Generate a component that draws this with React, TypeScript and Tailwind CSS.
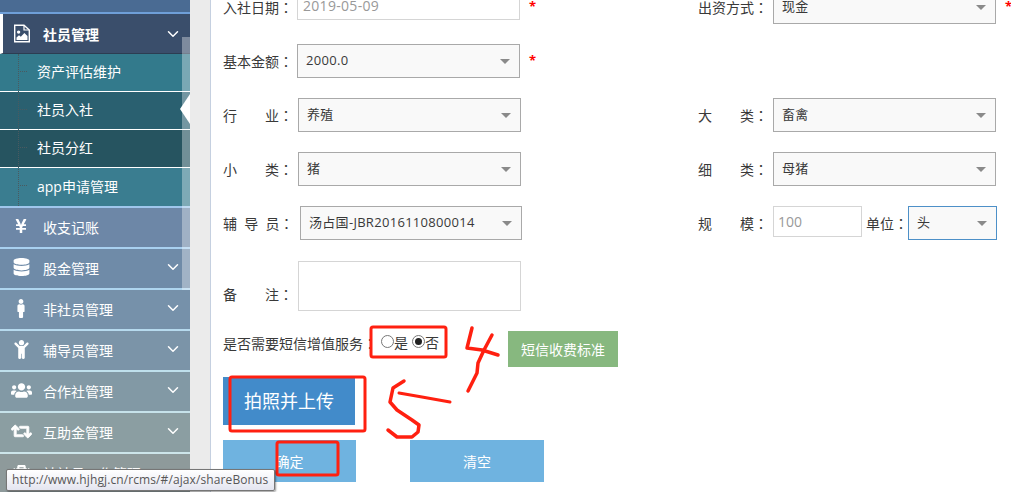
import { FaYenSign, FaDatabase, FaMale, FaChild, FaUsers, FaRetweet, FaMedkit } from "react-icons/fa";
import { ChevronDown } from "lucide-react";
import type { ReactNode } from "react";

const font = { fontFamily: '"Open Sans","Noto Sans CJK SC",sans-serif' };

function Label({ text, w = "w-[74px]" }: { text: string; w?: string }) {
  return (
    <span className={`${w} shrink-0 text-[14px] text-[#393939] whitespace-pre`}>
      {text}
      <span className="font-['Noto_Sans_CJK_TC']">：</span>
    </span>
  );
}

function Select({ value, w = "w-[223px]", cls = "border-[#a9a9a9]" }: { value: string; w?: string; cls?: string }) {
  return (
    <div className={`${w} h-[34px] border ${cls} bg-[#f9f9f9] flex items-center justify-between pl-[8px] pr-[9px] text-[13px] tracking-[0.3px] text-[#393939]`}>
      <span>{value}</span>
      <span className="w-0 h-0 border-x-[5px] border-x-transparent border-t-[5px] border-t-[#8a8a8a]" />
    </div>
  );
}

function Star() {
  return <span className="ml-[9px] text-[13px] text-[#f00] self-start mt-[10px] leading-none font-bold">*</span>;
}

function Row({ left, right }: { left: ReactNode; right?: ReactNode }) {
  return (
    <div className="grid grid-cols-[475px_1fr] h-[34px] mb-[20px]">
      <div className="flex items-center">{left}</div>
      <div className="flex items-center">{right}</div>
    </div>
  );
}

const menu = [
  { icon: <FaYenSign className="w-[14px] h-[16px]" />, t: "收支记账", arrow: false, bg: "bg-[#6d87a7]", line: "border-[#9fc6ec]" },
  { icon: <FaDatabase className="w-[17px] h-[18px]" />, t: "股金管理", arrow: true, bg: "bg-[#6f8ba8]", line: "border-[#a8d0f0]" },
  { icon: <FaMale className="w-[18px] h-[19px]" />, t: "非社员管理", arrow: true, bg: "bg-[#7691aa]", line: "border-[#aed5ef]" },
  { icon: <FaChild className="w-[17px] h-[19px]" />, t: "辅导员管理", arrow: true, bg: "bg-[#7b94a8]", line: "border-[#b6daee]" },
  { icon: <FaUsers className="w-[21px] h-[21px]" />, t: "合作社管理", arrow: true, bg: "bg-[#8299a5]", line: "border-[#bfe0ec]" },
  { icon: <FaRetweet className="w-[21px] h-[19px] stroke-current stroke-[24]" />, t: "互助金管理", arrow: true, bg: "bg-[#8b9ea2]", line: "border-[#c6e2ea]" },
  { icon: <FaMedkit className="w-[17px] h-[17px]" />, t: "社社员工作管理", arrow: true, bg: "bg-[#8e9a9b]", line: "border-[#cde5ea]" },
];

const subs = [
  { t: "资产评估维护", bg: "bg-[#337a8c]" },
  { t: "社员入社", bg: "bg-[#2a6070]" },
  { t: "社员分红", bg: "bg-[#265460]" },
  { t: "app申请管理", bg: "bg-[#3a7d90]" },
];

export default function App() {
  return (
    <div className="relative flex w-[1011px] h-[492px] overflow-hidden bg-white" style={font}>
      <aside className="relative w-[190px] shrink-0 h-full overflow-hidden bg-[#8e9a9b] text-white">
        <div className="h-[12px] bg-[#4a6b93] border-b-[2px] border-[#6f9fd8] box-content" />
        <div className="h-[40px] bg-[#3a4e6b] border-l-[3px] border-white border-b border-b-[#2c3d52] flex items-center pl-[11px] pr-[8px] pt-[2px] text-[14px] font-bold">
          <svg viewBox="0 0 16 18" className="w-[16px] h-[19px] -mt-[2px]" fill="none">
            <path d="M0.7 0.7 H10 L15.3 5.5 V17.3 H0.7 Z" stroke="white" strokeWidth="1.4" />
            <path d="M10 0.7 V5.5 H15.3" stroke="white" strokeWidth="1.2" />
            <circle cx="4.6" cy="7.6" r="1.7" fill="white" />
            <path d="M2.5 15.5 V13 L5 10.8 L6.8 12.2 L10.4 8.6 L13.5 11.6 V15.5 Z" fill="white" />
          </svg>
          <span className="ml-[13px] flex-1">社员管理</span>
          <ChevronDown className="w-[18px] h-[18px] -mt-[2px]" strokeWidth={2} />
        </div>
        {subs.map((s, i) => (
          <div key={s.t} className={`relative h-[38px] ${s.bg} ${i < 3 ? "border-b border-white" : ""} flex items-center pl-[37px] pb-[2px] text-[14px]`}>
            <span className="absolute left-[20px] top-[17px] w-[7px] border-t border-dotted border-[#4a5a60]" />
            {s.t}
          </div>
        ))}
        {menu.map((m) => (
          <div key={m.t} className={`h-[41px] ${m.bg} border-t-[2px] ${m.line} flex items-center pr-[8px] text-[14px]`}>
            <span className="w-[43px] flex justify-center pr-[1px] shrink-0 -mt-[3px]">{m.icon}</span>
            <span className="flex-1 whitespace-nowrap">{m.t}</span>
            {m.arrow && <ChevronDown className="w-[18px] h-[18px] -mt-[4px]" strokeWidth={2} />}
          </div>
        ))}
        <div className="absolute left-[18px] top-[54px] h-[152px] border-l border-dotted border-[#4a5a60]" />
        <div className="absolute right-0 top-[37px] w-[8px] h-[253px] bg-white/35" />
        <div className="absolute right-0 top-[94px] w-0 h-0 border-y-[15px] border-y-transparent border-r-[10px] border-r-white" />
      </aside>

      <div className="w-[20px] shrink-0 bg-[#ebebeb] border-r border-[#c5d0e0] box-content" />

      <main className="flex-1 min-w-0 pl-[12px] -mt-[10px] text-[14px] text-[#393939]">
        <Row
          left={<>
            <Label text="入社日期" />
            <div className="w-[223px] h-[30px] self-start border border-[#d5d5d5] flex items-center pl-[5px] text-[14px] tracking-[0.3px] text-[#999]">2019-05-09</div>
            <Star />
          </>}
          right={<>
            <Label text="出资方式" w="w-[75px]" />
            <Select value="现金" />
            <Star />
          </>}
        />
        <Row left={<><Label text="基本金额" /><Select value="2000.0" /><Star /></>} />
        <Row
          left={<><Label text={"行\u3000\u3000业"} w="w-[75px]" /><Select value="养殖" /></>}
          right={<><Label text={"大\u3000\u3000类"} w="w-[75px]" /><Select value="畜禽" /></>}
        />
        <Row
          left={<><Label text={"小\u3000\u3000类"} w="w-[75px]" /><Select value="猪" /></>}
          right={<><Label text={"细\u3000\u3000类"} w="w-[75px]" /><Select value="母猪" /></>}
        />
        <Row
          left={<><Label text={"辅  导  员"} w="w-[77px]" /><Select value="汤占国-JBR2016110800014" w="w-[222px]" /></>}
          right={<>
            <Label text={"规\u3000\u3000模"} w="w-[75px]" />
            <div className="w-[89px] h-[31px] self-start border border-[#d5d5d5] flex items-center pl-[4px] text-[14px] text-[#999]">100</div>
            <span className="ml-[4px] w-[42px] shrink-0 whitespace-nowrap text-[14px]">单位<span className="font-['Noto_Sans_CJK_TC']">：</span></span>
            <Select value="头" w="w-[89px]" cls="border-[#4d90c8]" />
          </>}
        />
        <div className="flex items-center h-[50px] mt-[21px]">
          <span className="pt-[16px]"><Label text={"备\u3000\u3000注"} w="w-[75px] block" /></span>
          <div className="w-[223px] h-[50px] border border-[#d5d5d5]" />
        </div>
        <div className="flex items-start h-[36px] mt-[20px]">
          <span className="w-[158px] shrink-0 whitespace-nowrap leading-[20px] mt-[2px]">是否需要短信增值服务<span className="font-['Noto_Sans_CJK_TC']">：</span></span>
          <span className="w-[13px] h-[13px] mt-[4px] rounded-full border border-[#777] bg-white shrink-0" />
          <span className="leading-[20px] mt-[2px]">是</span>
          <span className="ml-[4px] w-[13px] h-[13px] mt-[4px] rounded-full border border-[#777] bg-white flex items-center justify-center shrink-0">
            <span className="w-[7px] h-[7px] rounded-full bg-[#222]" />
          </span>
          <span className="leading-[20px] mt-[2px]">否</span>
          <button className="ml-[69px] w-[110px] h-[36px] bg-[#87b87f] text-white text-[14px]">短信收费标准</button>
        </div>
        <button className="block mt-[10px] w-[132px] h-[48px] bg-[#428bca] text-white text-[18px]">拍照并上传</button>
        <div className="flex mt-[15px]">
          <button className="w-[133px] h-[42px] bg-[#6fb3e0] text-white text-[14px]">确定</button>
          <button className="ml-[54px] w-[134px] h-[42px] bg-[#6fb3e0] text-white text-[14px]">清空</button>
        </div>
      </main>

      <svg className="absolute inset-0 pointer-events-none" width="1011" height="492" fill="none" stroke="#ff2010" strokeWidth="3" strokeLinecap="round" strokeLinejoin="round">
        <rect x="371" y="327" width="75" height="30" rx="2" />
        <rect x="230" y="377" width="135" height="54" rx="2" />
        <rect x="277" y="442" width="61" height="33" rx="2" />
        <path d="M472 328 L467 348 L482 350 L498 355" strokeWidth="3.5" />
        <path d="M492 335 L484 350 L478 363 L477 373 L468 391" strokeWidth="3.5" />
        <path d="M404 381 L393 388 L390 402 L397 410 L412 420 L419 425 L418 432 L412 437 L397 437 L388 430" strokeWidth="3.5" />
        <path d="M399 393 L422 397 L450 402" strokeWidth="3" />
      </svg>

      <div className="absolute left-[6px] top-[469px] w-[269px] h-[22px] border border-[#767676] rounded-[2px] bg-gradient-to-b from-white to-[#e4e5f0] shadow-[1px_1px_2px_rgba(0,0,0,0.4)] flex items-center pl-[5px] text-[12px] tracking-[0.1px] text-[#575757] whitespace-nowrap">
        http://www.hjhgj.cn/rcms/#/ajax/shareBonus
      </div>
    </div>
  );
}
